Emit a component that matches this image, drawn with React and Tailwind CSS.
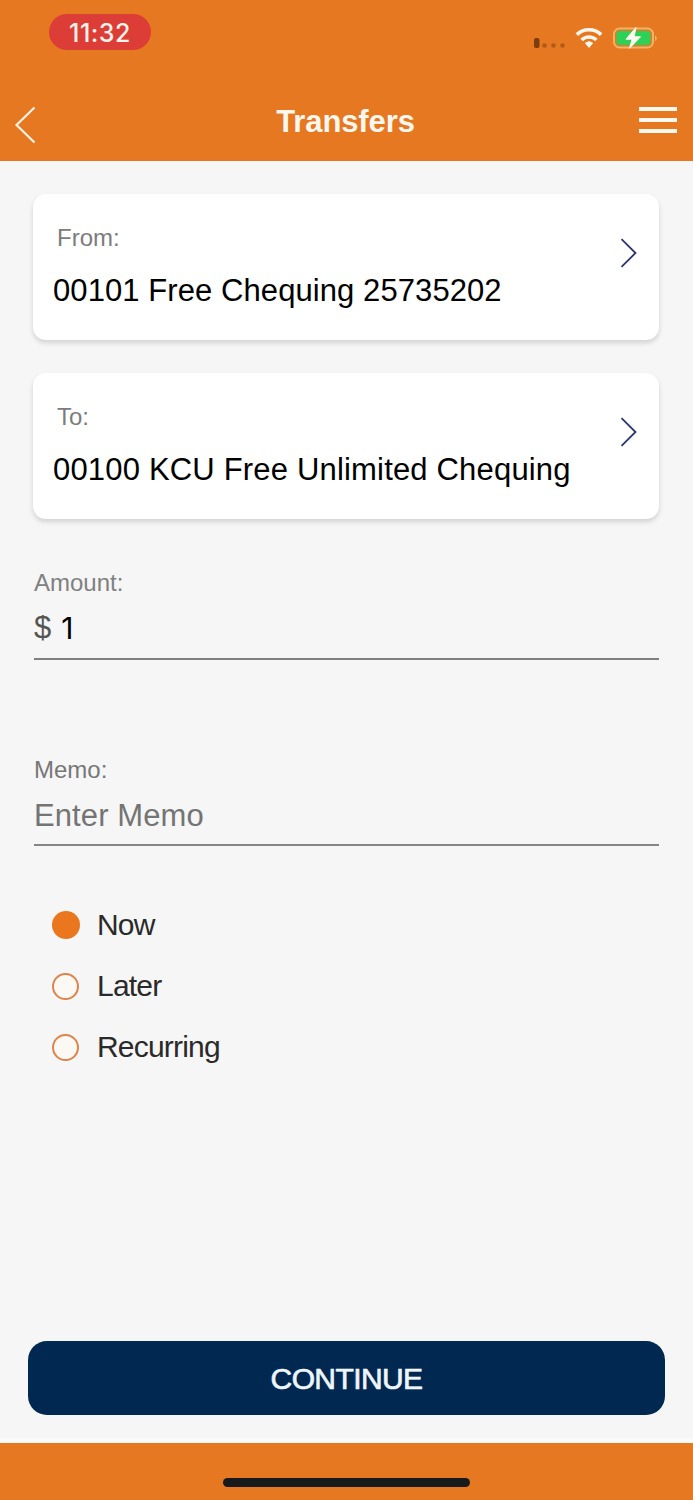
import React, { useState } from 'react';

const accounts = [
    { label: 'From:', name: '00101 Free Chequing 25735202', tracking: 'tracking-[0.08px]' },
    { label: 'To:', name: '00100 KCU Free Unlimited Chequing', tracking: 'tracking-[0.18px]' }
];

const schedules = ['Now', 'Later', 'Recurring'];

const StatusBar = () => (
    <div className="flex items-start justify-between pl-[49px] pr-[36px] pt-[14px]">
        <div className="w-[102px] h-[36px] rounded-full bg-[#dc3d36] flex items-center justify-center font-['Inter'] font-medium text-[25px] leading-[36px] tracking-[0.5px] pt-px text-[#fff3ea]">
            11:32
        </div>
        <svg width="124" height="24" viewBox="0 0 124 24" className="mt-[12px]">
            {/* signal */}
            <rect x="1" y="12" width="5.500" height="10" rx="2" fill="#7d3c0c" />
            <circle cx="11.500" cy="19.500" r="2.300" fill="#b05a1c" />
            <circle cx="20.500" cy="19.500" r="2.300" fill="#b05a1c" />
            <circle cx="29.500" cy="19.500" r="2.300" fill="#b05a1c" />
            {/* wifi */}
            <g fill="none" stroke="#fff6ec" strokeWidth="3.600">
                <path d="M43.800 8.600a17.600 17.600 0 0 1 24.400 0" />
                <path d="M48.600 14a10.600 10.600 0 0 1 14.800 0" />
            </g>
            <path d="M52.600 17.200a5.400 5.400 0 0 1 6.800 0L56 21z" fill="#fff6ec" stroke="#fff6ec" strokeWidth="1.200" strokeLinejoin="round" />
            {/* battery */}
            <rect x="81" y="2.500" width="39" height="19" rx="5.500" fill="none" stroke="#efb469" strokeWidth="2" />
            <rect x="83.500" y="5" width="34" height="14" rx="3" fill="#2ed158" />
            <path d="M122 9.500c2.400 1 2.400 4.500 0 5.500z" fill="#efb469" />
            <path d="M103 1.500L93 13.200h6.200L96.500 22.300L107.500 10.800h-6.400z" fill="#fffaf0" stroke="#fffaf0" strokeWidth="1" strokeLinejoin="round" />
        </svg>
    </div>
);

const AccountCard = ({ label, name, tracking }) => (
    <button
        type="button"
        className="flex justify-between h-[146px] rounded-[13px] bg-white pl-[20px] pr-[21px] pt-[30px] text-left shadow-[0_3px_5px_rgba(0,0,0,0.15)]"
    >
        <div>
            <div className="pl-1 text-2xl leading-7 text-[#7c7c7c]">{label}</div>
            <div className={`mt-[21px] text-[31px] leading-9 whitespace-nowrap text-black ${tracking}`}>{name}</div>
        </div>
        <svg width="18" height="30" viewBox="0 0 18 30" className="mt-[14px]" fill="none" stroke="#2c3470" strokeWidth="1.8">
            <path d="M1.500 1.200L15.500 15L1.500 28.800" />
        </svg>
    </button>
);

const App = () => {
    const [schedule, setSchedule] = useState('Now');

    return (
        <div className="w-full h-[1500px] flex flex-col overflow-hidden bg-[#f6f6f6] font-['Liberation_Sans',sans-serif]">
            <header className="h-[161px] shrink-0 bg-[#e57820]">
                <StatusBar />
                <div className="mt-[50px] flex items-start justify-between pl-[14px] pr-[16px]">
                    <button type="button" className="w-[38px] pt-[6px]">
                        <svg width="22" height="38" viewBox="0 0 22 38" fill="none" stroke="#fff3e6" strokeWidth="2.2">
                            <path d="M20.500 1.500L2.500 19L20.500 36.500" />
                        </svg>
                    </button>
                    <h1 className="pt-px text-[31px] leading-[42px] font-bold tracking-[-0.1px] text-[#fff7ee]">Transfers</h1>
                    <button type="button" className="flex flex-col gap-[7px] pt-[7px]">
                        <span className="block w-[38px] h-1 bg-[#fff8ee]"></span>
                        <span className="block w-[38px] h-1 bg-[#fff8ee]"></span>
                        <span className="block w-[38px] h-1 bg-[#fff8ee]"></span>
                    </button>
                </div>
            </header>

            <main className="flex-1 flex flex-col px-[34px] pt-[33px]">
                <div className="-ml-px flex flex-col gap-[33px]">
                    {accounts.map(account => (
                        <AccountCard key={account.label} {...account} />
                    ))}
                </div>

                <div className="mt-[50px] h-[91px] border-b-2 border-[#808080]">
                    <div className="text-2xl leading-7 text-[#808080]">Amount:</div>
                    <div className="mt-[13px] flex gap-[10px] text-[31px] leading-9">
                        <span className="text-[#555]">$</span>
                        <span className="font-['Inter'] text-[30px] text-black">1</span>
                    </div>
                </div>

                <div className="mt-[95px] h-[91px] border-b-2 border-[#858585]">
                    <div className="pt-px text-2xl leading-7 text-[#777]">Memo:</div>
                    <div className="mt-[14px] text-[31px] leading-9 tracking-[0.1px] text-[#747474]">Enter Memo</div>
                </div>

                <div className="mt-[61px] pl-[18px] flex flex-col gap-[25px]">
                    {schedules.map(item => (
                        <button
                            key={item}
                            type="button"
                            onClick={() => setSchedule(item)}
                            className="flex items-center h-9"
                        >
                            <span className="flex w-[45px]">
                                {schedule === item ? (
                                    <span className="block w-7 h-7 rounded-full bg-[#ea771e]"></span>
                                ) : (
                                    <span className="block w-[27px] h-[27px] rounded-full border-2 border-[#e0834a] bg-[#fcf8f4]"></span>
                                )}
                            </span>
                            <span className="text-[30px] leading-9 tracking-[-0.8px] text-[#2a2a2a]">{item}</span>
                        </button>
                    ))}
                </div>
            </main>

            <div className="px-[28px] pb-[23px]">
                <button
                    type="button"
                    className="w-full h-[74px] rounded-[19px] bg-[#012851] text-[30px] tracking-[-0.6px] text-[#eef5fc] [-webkit-text-stroke:0.7px_#eef5fc]"
                >
                    CONTINUE
                </button>
            </div>

            <footer className="h-[62px] shrink-0 border-t-[5px] border-[#fafbfc] bg-[#e57820] flex items-start justify-center">
                <div className="mt-[35px] w-[247px] h-[9px] rounded-full bg-[#161a1b]"></div>
            </footer>
        </div>
    );
};

export default App;
